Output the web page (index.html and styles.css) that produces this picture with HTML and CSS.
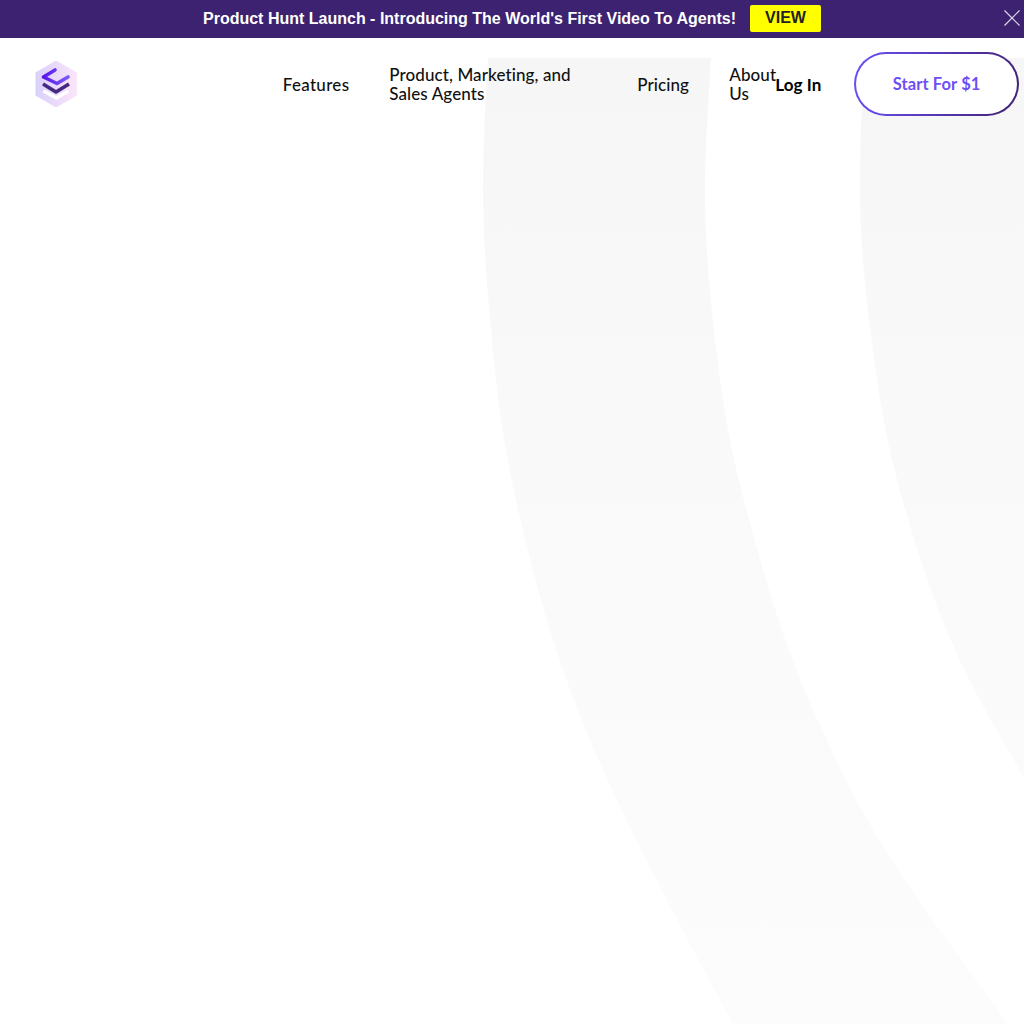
FILE: index.html
```html
<!DOCTYPE html>
<html lang="en">
<head>
  <meta charset="UTF-8" />
  <meta name="viewport" content="width=device-width, initial-scale=1.0" />
  <title>Start For $1</title>
  <link rel="stylesheet" href="styles.css">
</head>
<body>
  <div class="promo-bar">
    <p class="promo-text">Product Hunt Launch - Introducing The World's First Video To Agents!</p>
    <a class="promo-btn" href="#">VIEW</a>
    <button class="promo-close" type="button" aria-label="Close">
      <svg width="16" height="16" viewBox="0 0 16 16"><path d="M0.5 0.5 L15.5 15.5 M15.5 0.5 L0.5 15.5" stroke="#dcd7e8" stroke-width="1.2" fill="none"/></svg>
    </button>
  </div>

  <div class="hero">
    <svg class="hero-arcs" width="1024" height="966" viewBox="0 58 1024 966" aria-hidden="true">
      <defs>
        <linearGradient id="arcFade" x1="0" y1="58" x2="0" y2="1024" gradientUnits="userSpaceOnUse">
          <stop offset="0" stop-color="#f6f6f6"/>
          <stop offset="0.35" stop-color="#f9f9f9"/>
          <stop offset="0.8" stop-color="#fbfbfb"/>
          <stop offset="1" stop-color="#fcfcfc"/>
        </linearGradient>
      </defs>
      <path fill="url(#arcFade)" d="M488 58 C485.4 102 483 146 483 190 C483 253 489.7 317 496 380 C503.1 451 519.8 522 539 593 C557.6 662 584 731 617 800 C653 875 692 949 733 1024 L1008 1024 C954 948 894.4 873 855 797 C819.6 729 790.4 661 770 593 C748.7 522 729.2 451 720 380 C711.8 317 705 253 705 190 C705 146 708.4 102 711 58 Z"/>
      <path fill="url(#arcFade)" d="M864 58 C861.5 102 860 146 860 190 C860 253 868.2 317 877 380 C887 451 907 522 932 593 C953 654 987 716 1024 777 L1024 58 Z"/>
    </svg>

    <header class="site-nav">
      <a class="logo" href="#">
        <svg width="44" height="48" viewBox="0 0 44 48">
          <defs>
            <linearGradient id="hexFill" x1="0" y1="0" x2="1" y2="0">
              <stop offset="0" stop-color="#d9d0fb"/>
              <stop offset="1" stop-color="#fbe6fa"/>
            </linearGradient>
            <linearGradient id="topChevron" x1="0" y1="0" x2="1" y2="0">
              <stop offset="0" stop-color="#5b14ec"/>
              <stop offset="1" stop-color="#7a5cf5"/>
            </linearGradient>
          </defs>
          <path d="M22 0.5 L43 12.5 L43 35.5 L22 47.5 L1.5 35.5 L1.5 12.5 Z" fill="url(#hexFill)"/>
          <path d="M21 10 L9.5 17 L23 23.5 L34 17" fill="none" stroke="url(#topChevron)" stroke-width="3.6" stroke-linecap="round" stroke-linejoin="round"/>
          <path d="M9 24 L22 32 L35 24" fill="none" stroke="#45287f" stroke-width="3.6" stroke-linejoin="round"/>
          <path d="M9.5 31 L22.5 38 L34.5 31" fill="none" stroke="#fff" stroke-width="3.6" stroke-linejoin="round"/>
        </svg>
      </a>
      <nav class="nav-links">
        <a class="nav-features" href="#">Features</a>
        <a class="nav-wide" href="#">Product, Marketing, and Sales Agents</a>
        <a class="nav-pricing" href="#">Pricing</a>
        <a class="nav-narrow" href="#">About Us</a>
      </nav>
      <a class="login" href="#">Log In</a>
      <a class="start-btn" href="#"><span>Start For $1</span></a>
    </header>
  </div>
</body>
</html>
```

FILE: styles.css
```css
* {
  margin: 0;
  padding: 0;
  box-sizing: border-box;
}
body {
  background: #fff;
  font-family: 'Lato', 'Open Sans', sans-serif;
  overflow: hidden;
}
a {
  text-decoration: none;
  color: inherit;
}
.promo-bar {
  position: relative;
  height: 38px;
  background: #3e2272;
  display: flex;
  align-items: center;
  padding-left: 203px;
  gap: 14px;
}
.promo-text {
  color: #fff;
  font-family: 'Liberation Sans', Arial, sans-serif;
  font-weight: 700;
  font-size: 16px;
}
.promo-btn {
  width: 71px;
  height: 27px;
  margin-bottom: 2px;
  display: flex;
  align-items: center;
  justify-content: center;
  background: #ff0;
  border-radius: 2px;
  color: #222;
  font-family: 'Liberation Sans', Arial, sans-serif;
  font-weight: 700;
  font-size: 16px;
}
.promo-close {
  position: absolute;
  top: 10px;
  right: 4px;
  width: 16px;
  height: 16px;
  border: none;
  background: transparent;
}
.hero {
  position: relative;
  height: 986px;
}
.hero-arcs {
  position: absolute;
  top: 20px;
  left: 0;
}
.site-nav {
  position: relative;
  display: flex;
  align-items: center;
  height: 92px;
  padding: 0 5px 0 34px;
}
.logo {
  display: flex;
  width: 249px;
}
.nav-links {
  display: flex;
  align-items: center;
  gap: 40px;
  font-size: 17px;
  letter-spacing: 0.1px;
  line-height: 19px;
  font-weight: 500;
  color: #111;
}
.nav-features {
  width: 66.5px;
  letter-spacing: 0.3px;
}
.nav-wide {
  width: 208px;
}
.nav-pricing {
  width: 52px;
}
.nav-narrow {
  width: 46px;
}
.login {
  width: 47px;
  margin-right: 32px;
  font-size: 17px;
  letter-spacing: 0.1px;
  font-weight: 700;
  color: #000;
}
.start-btn {
  width: 165px;
  height: 64px;
  display: flex;
  align-items: center;
  justify-content: center;
  border: 2px solid transparent;
  border-radius: 32px;
  background: linear-gradient(#fff, #fff) padding-box, linear-gradient(100deg, #6e4ff6, #3e2272) border-box;
  color: #6e4ff6;
  font-size: 16.5px;
  letter-spacing: 0.1px;
  font-weight: 700;
}
```
